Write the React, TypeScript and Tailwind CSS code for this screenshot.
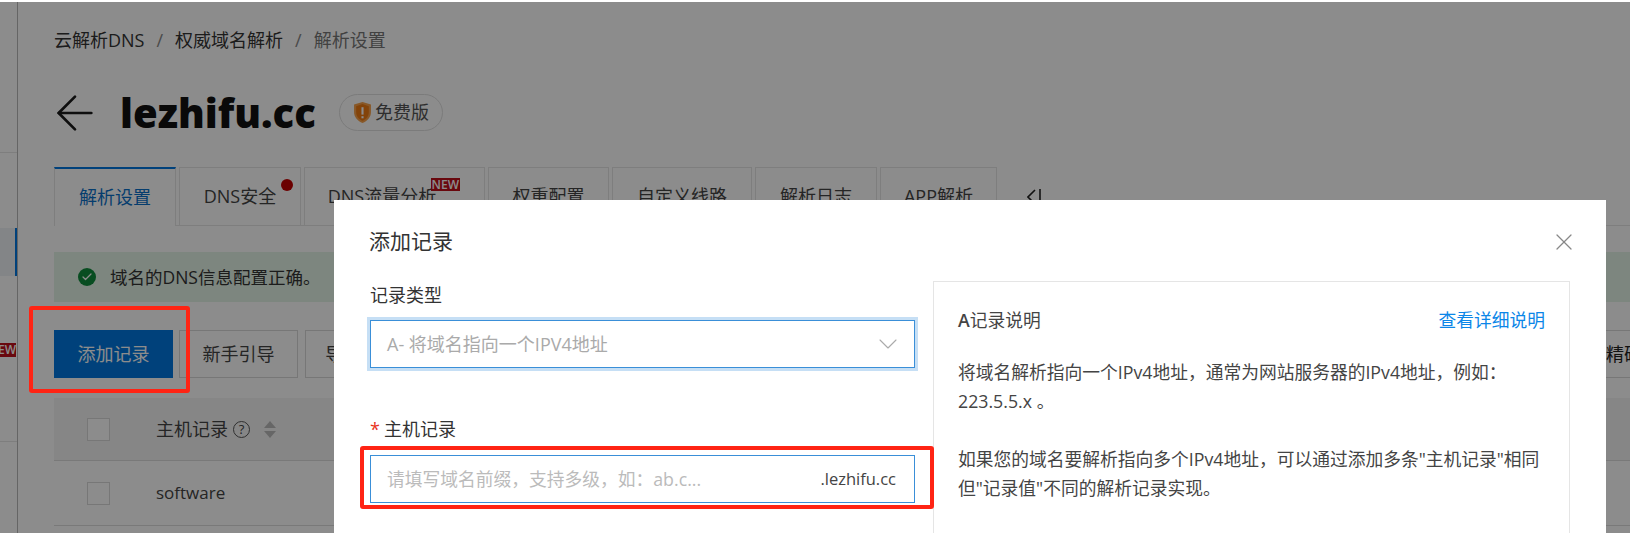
import React from 'react';
import { ArrowLeft, Check, ChevronDown, X } from 'lucide-react';

const tabs = [
  { label: 'DNS安全', width: 'w-[122px]', dot: true },
  { label: 'DNS流量分析', width: 'w-[181px] pr-[25px]', isNew: true },
  { label: '权重配置', width: 'w-[121px]' },
  { label: '自定义线路', width: 'w-[140px]' },
  { label: '解析日志', width: 'w-[122px]' },
  { label: 'APP解析', width: 'w-[117px]' },
];

function ShieldIcon() {
  return (
    <svg width="19" height="23" viewBox="0 0 18 21" className="shrink-0">
      <path d="M9 0.5 L17 3 V10 C17 15 13.5 18.5 9 20.5 C4.5 18.5 1 15 1 10 V3 Z" fill="#f7a14a" />
      <path d="M9 2.5 L15 4.5 V10 C15 14 12.5 16.8 9 18.4 C5.5 16.8 3 14 3 10 V4.5 Z" fill="#ef7a12" />
      <rect x="8" y="5.5" width="2" height="7" fill="#fff" />
      <rect x="8" y="14" width="2" height="2" fill="#fff" />
    </svg>
  );
}

function Checkbox() {
  return <div className="w-[23px] h-[23px] border border-[#d9d9d9] bg-white shrink-0" />;
}

function PageBehind() {
  return (
    <div className="flex h-full border-t-2 border-white">
      <div className="relative w-[18px] shrink-0 border-r border-[#b8b8b8] flex flex-col">
        <div className="h-[151px] border-b border-[#e5e5e5] shrink-0" />
        <div className="h-[75px] shrink-0" />
        <div className="h-[48px] shrink-0 bg-[#eef2f6] border-r-2 border-[#0077e0]" />
        <div className="h-[166px] border-b border-[#e5e5e5] shrink-0" />
        <div className="absolute left-0 top-[341px] w-[16px] h-[14px] overflow-hidden bg-[#c0101a] text-white text-[12px] leading-[14px] font-semibold flex justify-end">
          EW
        </div>
      </div>

      <div className="flex-1 min-w-0 pl-[36px] pt-[26px] flex flex-col">
        <div className="flex items-center h-[24px] text-[18px] text-[#333]">
          <span>云解析DNS</span>
          <span className="mx-[12px] text-[#888]">/</span>
          <span>权威域名解析</span>
          <span className="mx-[12px] text-[#888]">/</span>
          <span className="text-[#777]">解析设置</span>
        </div>

        <div className="flex items-center h-[37px] mt-[42px]">
          <div className="w-[66px] h-[37px] shrink-0 flex items-center">
            <ArrowLeft size={56} strokeWidth={1.15} className="text-[#1a1a1a] -ml-[7px] shrink-0" />
          </div>
          <h1 className="w-[219px] text-[40px] font-extrabold text-[#111] leading-none">lezhifu.cc</h1>
          <div className="flex items-center gap-[3px] h-[37px] w-[104px] pl-[13px] rounded-full border border-[#e0e0e0] text-[18px] text-[#555]">
            <ShieldIcon />
            <span>免费版</span>
          </div>
        </div>

        <div className="flex items-stretch h-[59px] mt-[36px] gap-[3px] border-b border-[#e5e5e5] text-[18px] text-[#444]">
          <div className="w-[122px] -mb-px flex items-center justify-center bg-white border-t-2 border-[#0077e0] border-l border-r border-l-[#e5e5e5] border-r-[#e5e5e5] text-[#0a6fc8]">
            解析设置
          </div>
          {tabs.map((t) => (
            <div key={t.label} className={`relative ${t.width} flex items-center justify-center border border-b-0 border-[#e5e5e5]`}>
              {t.label}
              {t.dot && <span className="absolute right-[7px] top-[11px] w-[12px] h-[12px] rounded-full bg-[#c40000]" />}
              {t.isNew && (
                <span className="absolute right-[24px] top-[10px] h-[13px] px-[1px] bg-[#c0101a] text-white text-[12px] leading-[13px] font-semibold">
                  NEW
                </span>
              )}
            </div>
          ))}
          <svg width="16" height="18" viewBox="0 0 16 18" className="ml-[27px] mt-[22px] shrink-0 text-[#222]">
            <path d="M8 1 L1 8 L7 14" fill="none" stroke="currentColor" strokeWidth="1.6" />
            <path d="M13 0 V16" fill="none" stroke="currentColor" strokeWidth="1.6" />
          </svg>
        </div>

        <div className="flex items-center h-[50px] mt-[26px] pl-[24px] bg-[#e3f4e7] text-[17.5px] text-[#333]">
          <span className="w-[18px] h-[18px] rounded-full bg-[#0f8c3c] flex items-center justify-center shrink-0">
            <Check size={12} strokeWidth={2.5} className="text-white" />
          </span>
          <span className="ml-[14px]">域名的DNS信息配置正确。</span>
        </div>

        <div className="flex items-center h-[48px] mt-[28px] text-[18px]">
          <button className="w-[119px] h-full bg-[#0077e0] text-white">添加记录</button>
          <button className="ml-[6px] w-[119px] h-full border border-[#d9d9d9] text-[#444]">新手引导</button>
          <button className="ml-[7px] w-[119px] h-full border border-[#d9d9d9] text-[#444]">导入/导出</button>
          <div className="ml-auto -mr-[48px] w-[200px] h-full flex items-center justify-end border-y border-[#d9d9d9] text-[#222] whitespace-nowrap">
            精确搜索
          </div>
        </div>

        <div className="mt-[20px] flex items-center h-[63px] pl-[33px] bg-[#f5f5f5] border-b border-[#dcdcdc] text-[18px] text-[#444]">
          <Checkbox />
          <span className="ml-[46px]">主机记录</span>
          <span className="ml-[5px] w-[17px] h-[17px] rounded-full border border-[#555] text-[13px] leading-[15px] text-center">?</span>
          <span className="ml-[14px] flex flex-col gap-[3px]">
            <span className="w-0 h-0 border-x-[6px] border-x-transparent border-b-[7px] border-b-[#bbb]" />
            <span className="w-0 h-0 border-x-[6px] border-x-transparent border-t-[7px] border-t-[#bbb]" />
          </span>
        </div>
        <div className="flex items-center h-[65px] pl-[33px] border-b border-[#dcdcdc] text-[17px] text-[#444]">
          <Checkbox />
          <span className="ml-[46px]">software</span>
        </div>
      </div>
    </div>
  );
}

function Modal() {
  return (
    <div className="absolute left-[334px] top-[200px] w-[1272px] h-[333px] bg-white overflow-hidden px-[36px] pt-[28px]">
      <div className="flex items-center justify-between h-[28px]">
        <h2 className="-ml-px text-[21px] text-[#333] font-normal">添加记录</h2>
        <X size={28} strokeWidth={1.1} className="text-[#888] -mr-[8px]" />
      </div>

      <div className="flex mt-[26px]">
        <div className="w-[545px] shrink-0">
          <label className="block h-[26px] leading-[26px] text-[18px] text-[#333]">记录类型</label>
          <div className="mt-[12px] flex items-center justify-between h-[48px] pl-[16px] pr-[15px] border border-[#3a8fd8] outline-[3px] outline-[#c6dff5] text-[18px] text-[#aaa]">
            <span>A- 将域名指向一个IPV4地址</span>
            <ChevronDown size={32} strokeWidth={0.8} className="text-[#aaa] -mr-[5px]" />
          </div>
          <label className="block mt-[48px] h-[26px] leading-[26px] text-[18px] text-[#333]">
            <span className="text-[#e8341c] mr-[4px]">*</span>主机记录
          </label>
          <div className="mt-[13px] flex items-center justify-between h-[48px] pl-[16px] pr-[18px] border border-[#3a8fd8] text-[17.75px]">
            <span className="text-[#bbb]">请填写域名前缀，支持多级，如：ab.c...</span>
            <span className="text-[16.5px] text-[#444]">.lezhifu.cc</span>
          </div>
        </div>

        <div className="ml-[18px] -mt-px w-[637px] h-[260px] border border-[#e5e5e5] px-[24px] pt-[25px] text-[17.75px] text-[#444]">
          <div className="flex items-center justify-between h-[26px]">
            <span><b className="font-semibold">A</b>记录说明</span>
            <a className="text-[#0b86e8]">查看详细说明</a>
          </div>
          <p className="mt-[25px] leading-[29px]">
            将域名解析指向一个IPv4地址，通常为网站服务器的IPv4地址，例如：
            <br />
            223.5.5.x 。
          </p>
          <p className="mt-[29px] leading-[29px]">
            如果您的域名要解析指向多个IPv4地址，可以通过添加多条"主机记录"相同但"记录值"不同的解析记录实现。
          </p>
        </div>
      </div>
    </div>
  );
}

export default function App() {
  return (
    <div className="relative w-[1630px] h-[533px] overflow-hidden bg-white font-['Open_Sans','Noto_Sans_CJK_SC',sans-serif]">
      <PageBehind />
      <div className="absolute left-0 right-0 top-[2px] bottom-0 bg-black/45" />
      <Modal />
      <div className="absolute left-[29px] top-[306px] w-[161px] h-[87px] rounded-[3px] border-[4px] border-[#ff2414]" />
      <div className="absolute left-[360px] top-[446px] w-[574px] h-[63px] rounded-[3px] border-[4px] border-[#ff2414]" />
    </div>
  );
}
